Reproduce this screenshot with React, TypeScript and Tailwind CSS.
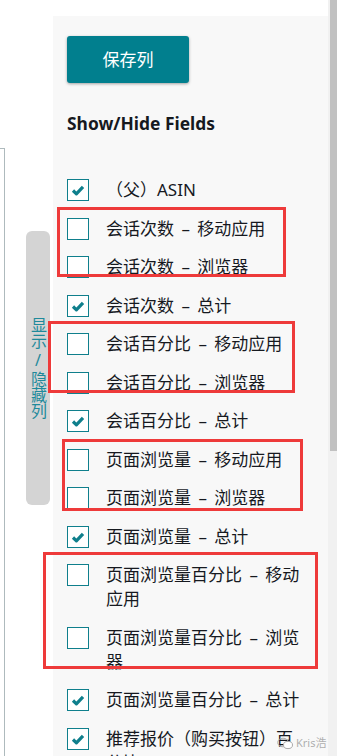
import React from 'react';

type Field = { label: string; checked: boolean };

const fields: Field[] = [
  { label: '（父）ASIN', checked: true },
  { label: '会话次数 – 移动应用', checked: false },
  { label: '会话次数 – 浏览器', checked: false },
  { label: '会话次数 – 总计', checked: true },
  { label: '会话百分比 – 移动应用', checked: false },
  { label: '会话百分比 – 浏览器', checked: false },
  { label: '会话百分比 – 总计', checked: true },
  { label: '页面浏览量 – 移动应用', checked: false },
  { label: '页面浏览量 – 浏览器', checked: false },
  { label: '页面浏览量 – 总计', checked: true },
  { label: '页面浏览量百分比 – 移动应用', checked: false },
  { label: '页面浏览量百分比 – 浏览器', checked: false },
  { label: '页面浏览量百分比 – 总计', checked: true },
  { label: '推荐报价（购买按钮）百分比', checked: true },
];

// red annotation boxes drawn over the list
const marks = [
  { left: 57, top: 207, width: 229, height: 70 },
  { left: 48, top: 321, width: 247, height: 72 },
  { left: 62, top: 439, width: 241, height: 72 },
  { left: 43, top: 552, width: 275, height: 117 },
];

const Checkbox = ({ checked }: { checked: boolean }) => (
  <span className="mt-px flex h-[22px] w-[22px] shrink-0 items-center justify-center border-[1.5px] border-[#0f7f8c] bg-white">
    {checked && (
      <svg width="16" height="16" viewBox="0 0 16 16">
        <path d="M3 8.5 L6.4 11.8 L13 4.8" fill="none" stroke="#0f7f8c" strokeWidth="3.2" strokeLinejoin="round" />
      </svg>
    )}
  </span>
);

export default function App() {
  return (
    <div
      className="relative flex h-[756px] w-[337px] overflow-hidden bg-white text-[#16191f]"
      style={{ fontFamily: '"Noto Sans", "Noto Sans CJK SC", sans-serif' }}
    >
      {/* left strip with collapsed table edge and vertical tab */}
      <div className="flex w-[53px] shrink-0">
        <div className="mt-[148px] w-[5px] shrink-0 border-t border-r border-[#aebabd]" />
        <div className="ml-[21px] mt-[231px] flex h-[274px] w-[24px] items-center justify-center rounded-[6px] bg-[#d4d4d4]">
          <span className="text-[16px] leading-[24px] text-[#1f8a9b] [text-orientation:upright] [writing-mode:vertical-rl]">
            显示/隐藏列
          </span>
        </div>
      </div>

      {/* settings panel */}
      <div className="mt-[16px] flex-1 bg-[#f8f8f8] pl-[14px] pt-[20px]">
        <button className="flex h-[47px] w-[122px] items-center justify-center rounded-[3px] bg-[#017f8e] text-[17px] text-white shadow-[0_1px_3px_rgba(0,0,0,0.35)]">
          保存列
        </button>
        <h3 className="mt-[28px] text-[17.4px] font-bold leading-[24px]">Show/Hide Fields</h3>
        <div className="mt-[43px] flex flex-col gap-[14.5px]">
          {fields.map((f, i) => (
            <label key={i} className="flex items-start gap-[17px] text-[17px] leading-[24px]">
              <Checkbox checked={f.checked} />
              <span className="w-[200px] [word-spacing:3px]">{f.label}</span>
            </label>
          ))}
        </div>
      </div>

      {/* scrollbar */}
      <div className="flex w-[9px] shrink-0 justify-end bg-[#f1f1f1]">
        <div className="h-[451px] w-[7px] bg-[#c1c1c1]" />
      </div>

      {marks.map((m, i) => (
        <div
          key={i}
          className="pointer-events-none absolute border-[3px] border-[#ee3a3a]"
          style={{ left: m.left, top: m.top, width: m.width, height: m.height }}
        />
      ))}

      {/* watermark */}
      <div className="pointer-events-none absolute left-[277px] top-[736px] flex items-center gap-[2px] text-[11px] leading-[14px] text-[#9a9a9a]/80">
        <svg width="17" height="13" viewBox="0 0 17 13">
          <ellipse cx="6" cy="5.5" rx="5.3" ry="4.3" fill="none" stroke="#aaa" strokeWidth="1" />
          <ellipse cx="11" cy="8" rx="4.5" ry="3.6" fill="white" stroke="#aaa" strokeWidth="1" />
        </svg>
        <span>Kris浩</span>
      </div>
    </div>
  );
}
